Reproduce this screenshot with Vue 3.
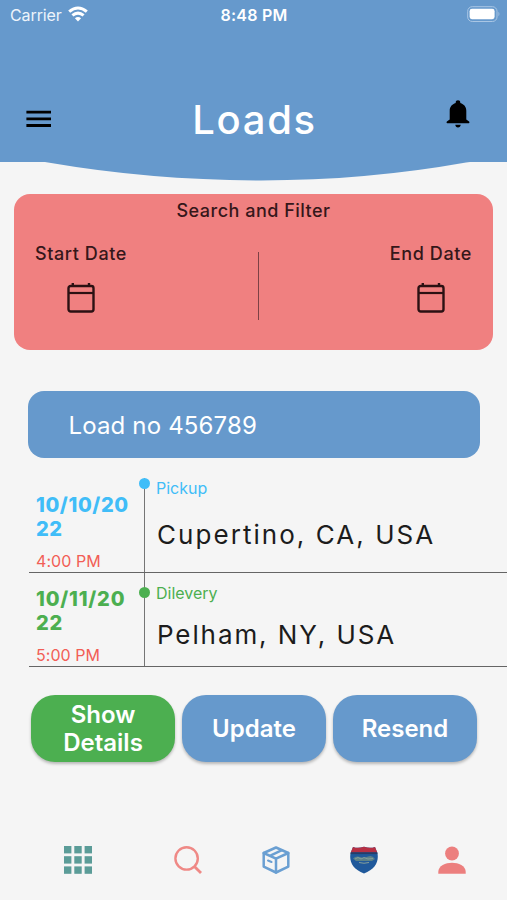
<script setup>
const stops = [
  { kind: 'pickup', label: 'Pickup', date: ['10/10/20', '22'], time: '4:00 PM', place: 'Cupertino, CA, USA' },
  { kind: 'delivery', label: 'Dilevery', date: ['10/11/20', '22'], time: '5:00 PM', place: 'Pelham, NY, USA' },
]
const filters = ['Start Date', 'End Date']
const cells = [0, 1, 2].flatMap((r) => [0, 1, 2].map((c) => ({ x: c * 10.3, y: r * 10.2 })))
</script>

<template>
  <main class="screen">
    <header class="header">
      <div class="status">
        <div class="carrier">
          <span>Carrier</span>
          <svg width="20" height="16" viewBox="0 0 20 16" fill="none" stroke="#fff" stroke-width="3.1">
            <path d="M1.2 5.6Q10-1.600 18.8 5.600" />
            <path d="M4.400 9.400Q10 4.800 15.600 9.400" />
            <path d="M6.900 12.200Q10 9.700 13.100 12.200L10 15.400Z" fill="#fff" stroke="none" />
          </svg>
        </div>
        <span class="clock">8:48 PM</span>
        <svg class="battery" width="33" height="17" viewBox="0 0 33 17">
          <rect x=".7" y=".7" width="29.300" height="14.800" rx="4.500" fill="none" stroke="#a9c6e4" stroke-width="1" />
          <rect x="2.600" y="2.800" width="25" height="10.400" rx="2.400" fill="#fff" />
          <path d="M31.500 5.800Q33.300 8 31.500 10.300Z" fill="#a9c6e4" />
        </svg>
      </div>
      <div class="titlebar">
        <svg class="menu" width="26" height="18" viewBox="0 0 26 18">
          <path d="M.4 2.100H25M.4 8.800H25M.4 15.500H25" stroke="#000" stroke-width="2.800" />
        </svg>
        <h1>Loads</h1>
        <svg class="bell" width="24" height="28" viewBox="0 0 24 28">
          <path d="M12 .3c-1.400 0-2.300.9-2.300 2.100v.6C6 4.100 3.700 7 3.700 10.700v8.700L.9 21.600c-.5.5-.5 1.700.4 1.700h21.400c.9 0 .9-1.200.4-1.700l-2.800-2.200v-8.700c0-3.700-2.300-6.600-6-7.700v-.6C14.300 1.200 13.400.3 12 .3Z" />
          <path d="M9.300 24.800h5.400c0 1.600-1.200 2.800-2.700 2.800s-2.700-1.200-2.700-2.800Z" />
        </svg>
      </div>
      <svg class="curve" width="507" height="20" viewBox="0 0 507 20">
        <path d="M45 0L48 .6Q152 18.500 261 18.500Q366 18.500 466 .6L470 0Z" fill="#6699cc" />
      </svg>
    </header>

    <section class="filter">
      <h2>Search and Filter</h2>
      <div class="filter-row">
        <div v-for="name in filters" :key="name" class="filter-item">
          <span>{{ name }}</span>
          <svg width="28" height="32" viewBox="0 0 28 32" fill="none" stroke="#2b1113" stroke-width="2.400">
            <rect x="1.500" y="4" width="25" height="25.500" rx="2.200" />
            <path d="M1.500 11H26.500" stroke-width="2.200" />
            <path d="M5.800 1V4.500M22 1V4.500" />
          </svg>
        </div>
        <i class="divider"></i>
      </div>
    </section>

    <section class="load">Load no 456789</section>

    <section class="stops">
      <article v-for="s in stops" :key="s.kind" class="stop" :class="s.kind">
        <div class="when">
          <strong><span v-for="d in s.date" :key="d">{{ d }}</span></strong>
          <span class="time">{{ s.time }}</span>
        </div>
        <div class="where">
          <i class="dot"></i>
          <span class="label">{{ s.label }}</span>
          <span class="place">{{ s.place }}</span>
        </div>
      </article>
    </section>

    <section class="actions">
      <button class="details">Show<br />Details</button>
      <button>Update</button>
      <button>Resend</button>
    </section>

    <nav class="tabs">
      <svg width="28" height="28" viewBox="0 0 28 28" fill="#5b9c98">
        <rect v-for="(c, i) in cells" :key="i" :x="c.x" :y="c.y" width="7.400" height="7.400" />
      </svg>
      <svg width="28" height="28" viewBox="0 0 28 28" fill="none" stroke="#ef8986" stroke-width="2.400">
        <circle cx="12.600" cy="12.400" r="11.200" />
        <path d="M20.400 20.400L27 27" stroke-width="2.800" />
      </svg>
      <svg width="28" height="28" viewBox="0 0 28 28" fill="none" stroke="#6a9fd2" stroke-width="2.500" stroke-linejoin="round" stroke-linecap="round">
        <path d="M14 1.500L26.300 7V20.600L14 26.500L1.700 20.600V7Z" />
        <path d="M1.700 7L14 12.700L26.300 7M14 12.700V26.500M7.800 9.800L20 4.200" />
        <path d="M6 14.500L9.500 16" stroke-width="2" />
      </svg>
      <svg width="28" height="28" viewBox="0 0 28 28">
        <path d="M3 1Q8 2.800 14 .8Q20 2.800 25 1L27.500 7.500C29 16 25 23.500 14 27.500C3 23.500-1 16 .5 7.500Z" fill="#20599b" />
        <path d="M3 1Q8 2.800 14 .8Q20 2.800 25 1L27.300 6.500H.7Z" fill="#b62f43" />
        <path d="M.6 7.200H27.400" stroke="#253d68" stroke-width="1.800" />
        <path d="M3 12.500Q6 9.500 10 11T18 10.500T25 13L22 15H6Z" fill="#5c8288" />
        <path d="M5 13L8 11.500L11 13L14 11.500L18 13L23 12.500M9 16.500Q14 18 19 16.500" stroke="#849e9a" fill="none" />
      </svg>
      <svg width="28" height="28" viewBox="0 0 28 28" fill="#ec7f7e">
        <circle cx="14" cy="7.500" r="6.900" />
        <path d="M.3 27.800V25.800C.3 20 7.500 16.800 14 16.800S27.700 20 27.700 25.800V27.800Z" />
      </svg>
    </nav>
  </main>
</template>

<style>
body { margin: 0; background: #f5f5f5; }
</style>

<style scoped>
.screen { width: 507px; height: 900px; overflow: hidden; box-sizing: border-box; display: flex; flex-direction: column; background: #f5f5f5; font-family: Inter, "Liberation Sans", sans-serif; color: #1c1c1c; }
svg { display: block; flex: none; }
.header { position: relative; height: 162px; flex: none; background: #6699cc; }
.curve { position: absolute; top: 162px; left: 0; }
.status { display: grid; grid-template-columns: 1fr auto 1fr; align-items: center; height: 30px; padding: 0 9px 0 10px; color: #fff; font-size: 16px; line-height: 29px; }
.carrier { display: flex; align-items: center; gap: 6px; color: #edf4fb; letter-spacing: -.1px; }
.carrier svg { margin-top: -2px; }
.clock { font-weight: 600; letter-spacing: .2px; }
.battery { justify-self: end; margin: -2px -2px 0 0; }
.titlebar { display: grid; grid-template-columns: 1fr auto 1fr; align-items: center; height: 60px; margin-top: 60px; padding: 0 37px 0 26px; }
.titlebar h1 { margin: 0; padding-left: 13px; color: #fff; font-size: 40px; line-height: 60px; font-weight: 550; letter-spacing: 1.700px; }
.menu { margin-top: -2px; }
.bell { justify-self: end; margin-top: -12px; }
.filter { height: 156px; flex: none; margin: 32px 14px 0; border-radius: 16px; background: #f08080; color: #35171a; font-size: 18px; font-weight: 500; letter-spacing: .6px; }
.filter h2 { margin: 0; padding-top: 5px; font: inherit; line-height: 24px; text-align: center; letter-spacing: .5px; }
.filter-row { position: relative; display: flex; justify-content: space-between; padding: 19px 21px 0; }
.filter-item { display: flex; flex-direction: column; align-items: center; gap: 16px; line-height: 24px; }
.divider { position: absolute; left: 244px; top: 29px; width: 1px; height: 68px; background: #7c4145; }
.load { height: 67px; flex: none; box-sizing: border-box; margin: 41px 27px 0 28px; padding-left: 40.500px; border-radius: 16px; background: #6699cc; color: #fff; font-size: 24px; line-height: 69px; letter-spacing: .15px; }
.stops { margin: 20px 0 0 29px; }
.stop { display: flex; height: 94px; box-sizing: border-box; border-bottom: 1px solid #656565; }
.stop.pickup { height: 95px; }
.when { width: 115px; box-sizing: border-box; padding: 15px 0 0 7px; display: flex; flex-direction: column; }
.delivery .when { padding-top: 14px; }
.when strong { display: flex; flex-direction: column; font-size: 20px; line-height: 24px; font-weight: 800; letter-spacing: .6px; }
.delivery .when strong { letter-spacing: .8px; }
.time { margin-top: 10px; font-size: 16px; line-height: 20px; color: #f25e56; letter-spacing: .05px; }
.where { position: relative; flex: 1; padding-left: 11px; border-left: 1px solid #757575; display: flex; flex-direction: column; }
.pickup { color: #40bdf8; }
.delivery { color: #4caf50; }
.dot { position: absolute; left: -6px; top: 0; width: 11px; height: 11px; border-radius: 50%; background: currentColor; }
.delivery .dot { top: 14px; }
.label { font-size: 16px; line-height: 20px; letter-spacing: 0; }
.delivery .label { margin-top: 10px; }
.place { margin-top: 21px; padding-left: 1px; color: #1c1c1c; font-size: 26px; line-height: 32px; letter-spacing: 2.050px; }
.delivery .place { margin-top: 16px; letter-spacing: 1.900px; }
.actions { display: flex; gap: 7px; margin: 28px 30px 0 31px; }
.actions button { flex: 1 1 0; height: 67px; padding: 0; border: 0; border-radius: 24px; background: #6699cc; color: #fff; box-shadow: 0 2px 3px rgb(0 0 0 / .25); font: 600 24px/28px Inter, "Liberation Sans", sans-serif; letter-spacing: 0; }
.actions .details { background: #4caf50; }
.tabs { display: flex; margin: 84px 40px 0 64px; }
.tabs svg:nth-child(2) { margin-left: 82px; }
.tabs svg:nth-child(3) { margin-left: 60px; }
.tabs svg:nth-child(4) { margin-left: 60px; }
.tabs svg:nth-child(5) { margin-left: 60px; }
</style>
